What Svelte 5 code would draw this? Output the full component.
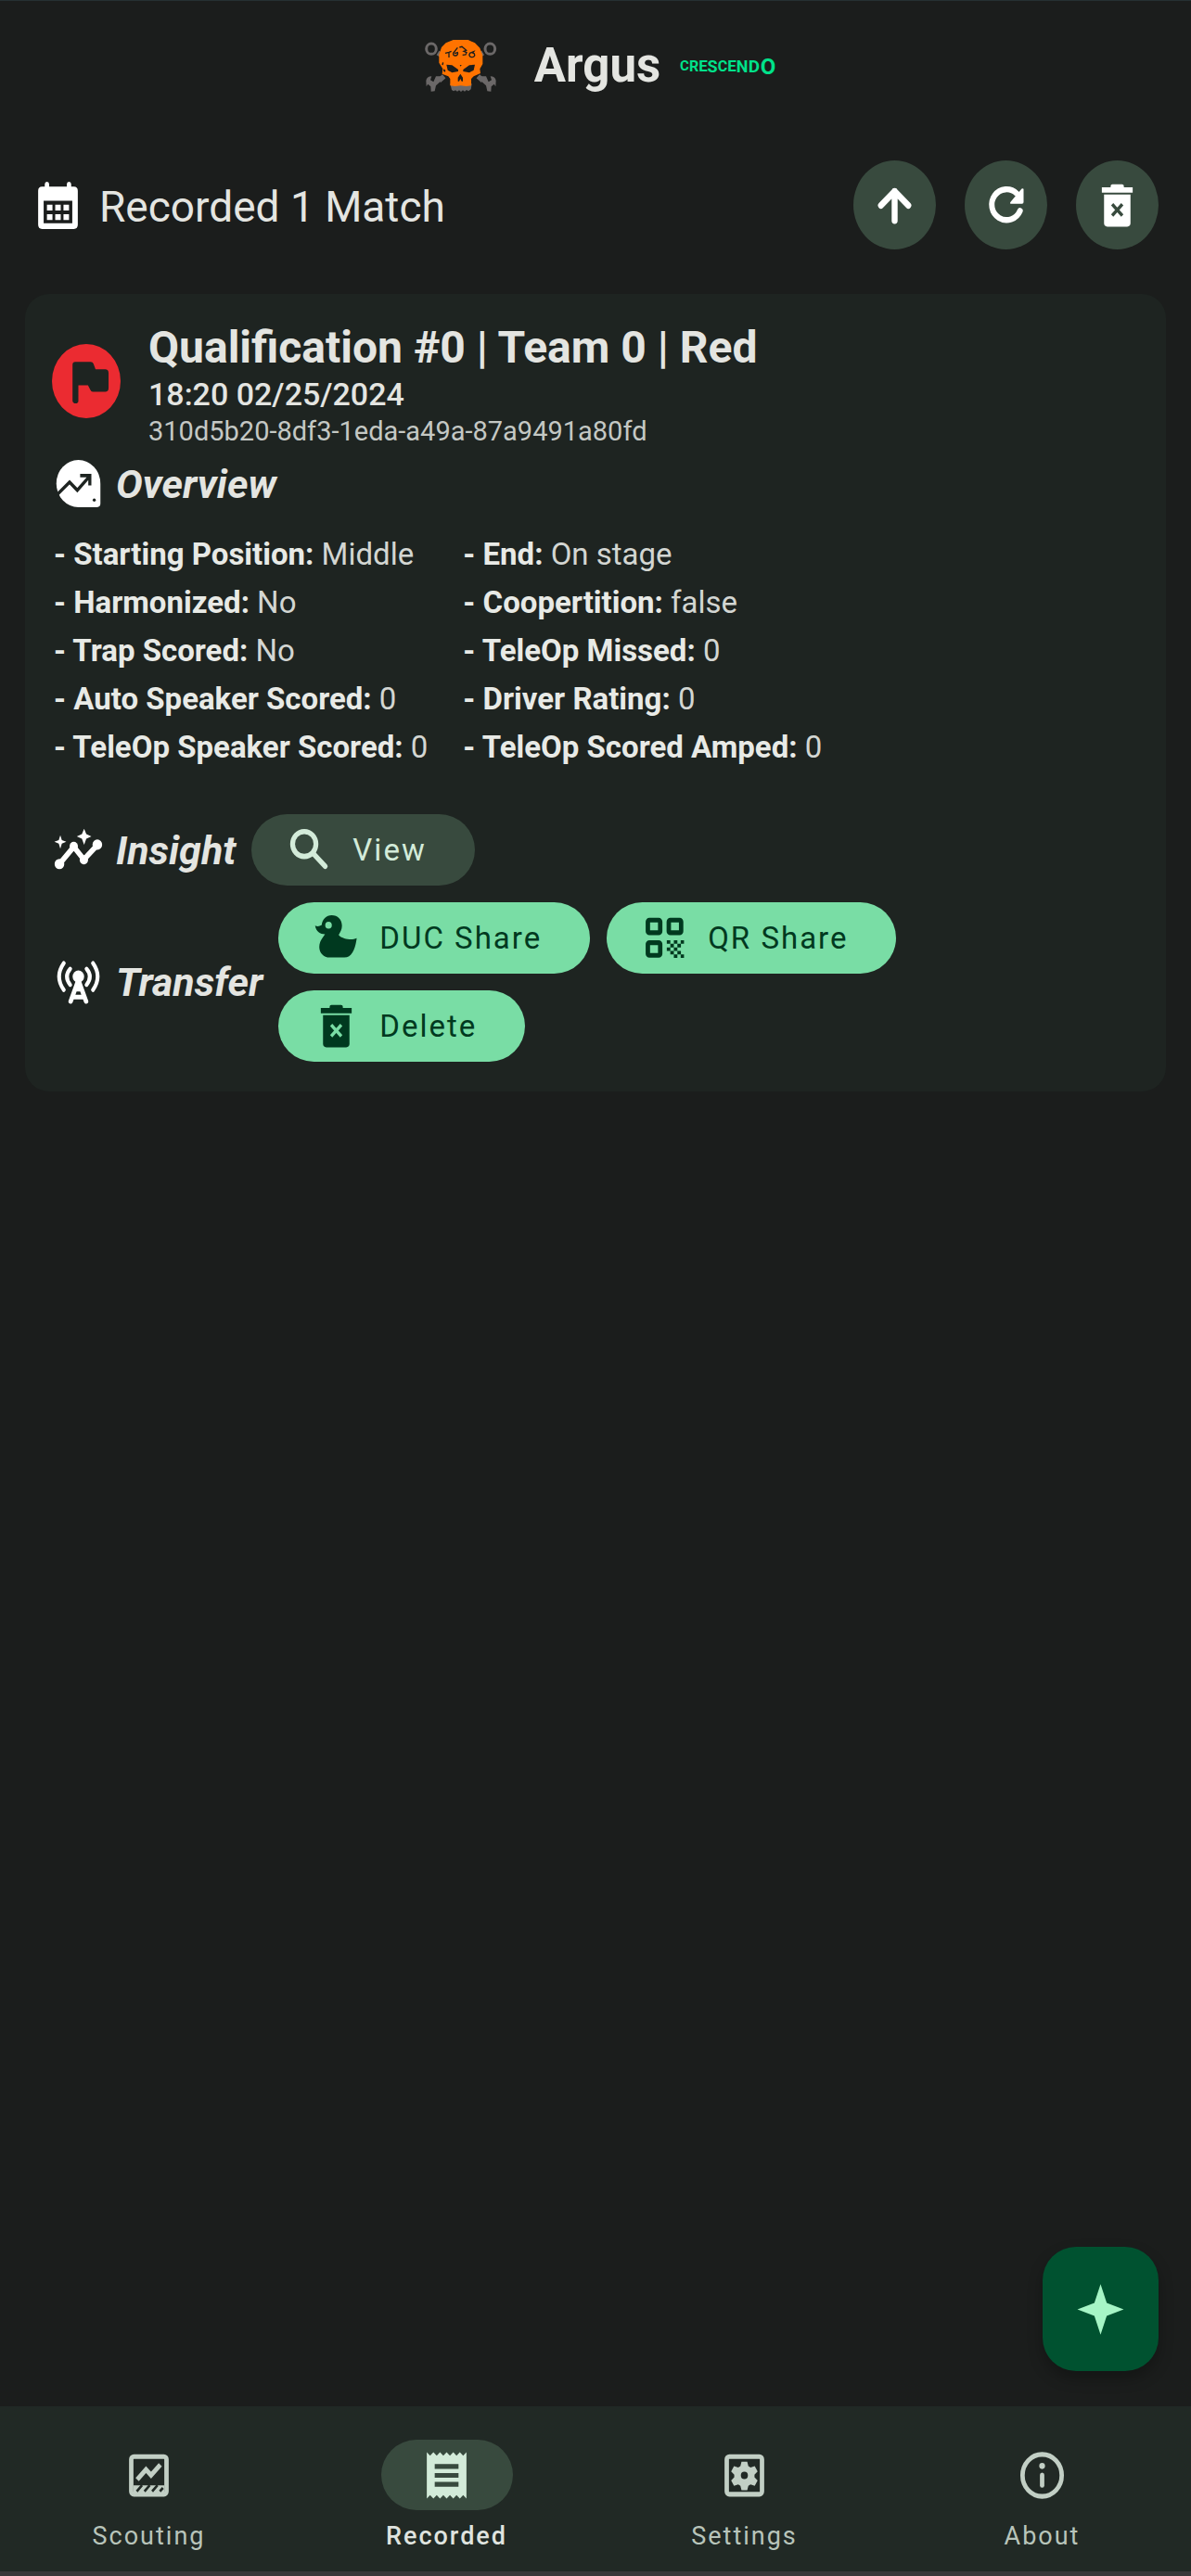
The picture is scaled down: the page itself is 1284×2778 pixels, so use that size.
<script>
  const columns = [
    [
      ['Starting Position', 'Middle'],
      ['Harmonized', 'No'],
      ['Trap Scored', 'No'],
      ['Auto Speaker Scored', '0'],
      ['TeleOp Speaker Scored', '0'],
    ],
    [
      ['End', 'On stage'],
      ['Coopertition', 'false'],
      ['TeleOp Missed', '0'],
      ['Driver Rating', '0'],
      ['TeleOp Scored Amped', '0'],
    ],
  ];

  const tabs = ['Scouting', 'Recorded', 'Settings', 'About'];
  let active = $state('Recorded');
</script>

{#snippet trash()}
  <svg class="icon" viewBox="0 0 24 24" preserveAspectRatio="none" aria-hidden="true">
    <path d="M9 4.3V3.8Q9 3 9.8 3h4.4q.8 0 .8.8v.5h4v2.3H5V4.3z" />
    <path d="M6 7.4h12v12.1q0 1.5-1.5 1.5h-9Q6 21 6 19.500z" />
    <path class="cut" d="M9.700 11.500l4.600 4.800M14.300 11.500l-4.600 4.800" />
  </svg>
{/snippet}

{#snippet tabIcon(name)}
  <svg class="icon" viewBox="0 0 24 24" preserveAspectRatio="none" aria-hidden="true">
    {#if name === 'Scouting'}
      <rect class="line" x="4" y="4" width="16" height="16" rx="1.200" />
      <path class="line" d="M6.700 13.800L10.700 9.500l2.300 2.400L17.200 7.500" />
      <path d="M5 16.200h14V20H5z" />
      <path class="cut thin" d="M6.500 18.800l2.400-2.600M10 18.800l2.400-2.600M13.500 18.800l2.400-2.600M17 18.800l1.400-1.500" />
    {:else if name === 'Recorded'}
      <path d="M3 2.200l1.500 1.400L6 2.200l1.500 1.400L9 2.200l1.500 1.400L12 2.200l1.500 1.400L15 2.200l1.500 1.400L18 2.200l1.500 1.400L21 2.200v19.600l-1.500-1.400L18 21.800l-1.500-1.400L15 21.800l-1.500-1.400L12 21.800l-1.500-1.400L9 21.800l-1.500-1.400L6 21.800l-1.500-1.400L3 21.800z" />
      <path class="cut bars" d="M6.600 8.200h10.800M6.600 12h10.800M6.600 15.800h10.800" />
    {:else if name === 'Settings'}
      <rect class="line" x="4" y="4" width="16" height="16" rx="1.200" />
      <path fill-rule="evenodd" d="M10.700 6.200h2.600l.5 1.900 1 .6 1.900-.6 1.300 2.200-1.400 1.400v1.100l1.400 1.400-1.300 2.200-1.900-.6-1 .6-.5 1.900h-2.600l-.5-1.900-1-.6-1.900.6L6 14.200l1.400-1.400v-1.100L6 10.300l1.300-2.200 1.900.6 1-.6zM12 10.400a1.600 1.600 0 1 0 0 3.200 1.600 1.600 0 0 0 0-3.200z" />
    {:else}
      <ellipse class="line" cx="12" cy="12" rx="8.900" ry="8.900" />
      <circle cx="12" cy="8" r="1.300" />
      <path class="line" stroke-linecap="round" d="M12 11.800v4.400" />
    {/if}
  </svg>
{/snippet}

<div class="app">
  <header class="brand">
    <svg class="skull" viewBox="58 128 234 172" aria-hidden="true">
      <g class="wrench">
        <path d="M100 172l16 10M246 172l-16 10M104 262l16-14M246 262l-16-14" stroke-width="16" />
        <ellipse cx="79" cy="159" rx="16" ry="17" stroke-width="9" fill="none" />
        <ellipse cx="269" cy="159" rx="16" ry="17" stroke-width="9" fill="none" />
        <path class="solid" d="M62 262q2-14 18-14l-4 12 10 6 8-18h22l2 8-24 22-4 18-12 1-1-16-9-8-5 8z" />
        <path class="solid" d="M288 262q-2-14-18-14l4 12-10 6-8-18h-22l-2 8 24 22 4 18 12 1 1-16 9-8 5 8z" />
        <path class="solid" d="M140 272h70l-3 18-8 6-6-4-6 5-6-4-6 5-6-5-6 4-6-4-6 3-6-4z" />
      </g>
      <path class="bone" d="M150 130h48l22 10 16 16 9 24v28l-9 16 2 14-22 10-8 8v22l-16 2-18-2-18 2-16-2v-22l-6-8-20-8 2-16-12-20v-26l8-24 14-14z" />
      <path class="hole" d="M128 210l18 2 20 14v6l-20 4-14-8zM220 210l-18 2-20 14v6l20 4 14-8zM173 240l8 12v12h-4l-4-8-4 8h-4v-12z" />
      <g class="hole">
        <path d="M115 202l4 2-2 8-4-1zM119 224l6 4-1 6-6-3zM171 211h6l-3 5z" />
      </g>
      <path class="scratch" d="M124 173l12-3 8-3M136 170v17M164 155l-14 18q-1 9 8 8 8-2 6-10l-10 3M170 154l8-2 14 12-8 3 9 4-3 7-10 1M216 168l-11 4q-7 8 1 13 10 3 13-4 1-8-6-9z" />
    </svg>
    <h1>Argus</h1>
    <svg class="crescendo" viewBox="0 0 106 56" role="img" aria-label="Crescendo">
      <g text-anchor="middle">
        <text x="6" y="33" font-size="15">C</text>
        <text x="16" y="34" font-size="16">R</text>
        <text x="26" y="34" font-size="17">E</text>
        <text x="36" y="35" font-size="18">S</text>
        <text x="47" y="34" font-size="16">C</text>
        <text x="57" y="34" font-size="17">E</text>
        <text x="68" y="35" font-size="18">N</text>
        <text x="81" y="35" font-size="19">D</text>
        <text x="96" y="37" font-size="24">O</text>
      </g>
    </svg>
  </header>

  <main>
    <div class="toolbar">
      <svg class="icon" viewBox="0 0 24 24" preserveAspectRatio="none" aria-hidden="true">
        <path fill-rule="evenodd" d="M6 3q0-1 1-1t1 1v1h8V3q0-1 1-1t1 1v1h1.200Q21 4 21 5.800v14.400q0 1.800-1.800 1.800H4.800Q3 22 3 20.200V5.800Q3 4 4.800 4H6zM5.500 10v9.600h13V10z" />
        <path d="M7 11.700h2.500v2.500H7zM10.750 11.700h2.500v2.500h-2.500zM14.500 11.700H17v2.500h-2.500zM7 15.700h2.500v2.500H7zM10.750 15.700h2.500v2.500h-2.500zM14.500 15.700H17v2.500h-2.500z" />
      </svg>
      <h2>Recorded 1 Match</h2>
      <div class="tools">
        <button class="round" aria-label="Upload">
          <svg class="icon" viewBox="0 0 24 24" preserveAspectRatio="none" aria-hidden="true">
            <path class="arrow" d="M12 18.500V6M5.800 12L12 6l6.200 6" />
          </svg>
        </button>
        <button class="round" aria-label="Refresh">
          <svg class="icon" viewBox="0 0 24 24" preserveAspectRatio="none" aria-hidden="true">
            <path class="arc" d="M16.900 7A6.700 6.500 0 1 0 18.400 14.300" />
            <path d="M20 5v5.600q0 .7-.7.700h-4.700q-1.200 0-.4-.9l4.600-5.100q.6-.8 1.200-.3z" />
          </svg>
        </button>
        <button class="round" aria-label="Delete all">{@render trash()}</button>
      </div>
    </div>

    <article class="card">
      <div class="summary">
        <svg class="flag" viewBox="2 2 20 20" preserveAspectRatio="none" aria-hidden="true">
          <path fill-rule="evenodd" d="M12 2a10 10 0 1 0 0 20 10 10 0 0 0 0-20zM8.800 6.800h4.500q.6 0 .8.500l.6 1.500h2.800q1 0 1 1v4.100q0 1-1 1h-3.600q-.5 0-.7-.5l-.7-1.300H9.700v4.200q0 .7-.8.700T8 17.300V7.600q0-.8.800-.8z" />
        </svg>
        <div>
          <h3>Qualification #0 | Team 0 | Red</h3>
          <p class="date">18:20 02/25/2024</p>
          <p class="uuid">310d5b20-8df3-1eda-a49a-87a9491a80fd</p>
        </div>
      </div>

      <h4 class="overview">
        <svg class="icon" viewBox="0 0 24 24" preserveAspectRatio="none" aria-hidden="true">
          <path d="M12 2a10 10 0 0 1 10 10v8.500q0 1.500-1.500 1.500H12A10 10 0 0 1 12 2z" />
          <path class="cut" d="M2 17l6-5.600 3.500 3.400L17 9M12.800 8.600H17.200V12.800" />
          <circle class="dot" cx="19.200" cy="19" r=".7" />
        </svg>
        <span>Overview</span>
      </h4>
      <div class="stats">
        {#each columns as rows}
          <ul>
            {#each rows as [label, value]}
              <li><b>- {label}:</b> {value}</li>
            {/each}
          </ul>
        {/each}
      </div>

      <div class="section">
        <h4>
          <svg class="icon" viewBox="0 0 24 24" preserveAspectRatio="none" aria-hidden="true">
            <path class="line wide" d="M3.400 18L9.900 10.700l4.600 5.400L20.600 10" />
            <circle cx="3.400" cy="18" r="2.200" /><circle cx="9.900" cy="10.500" r="1.900" />
            <circle cx="14.500" cy="16.300" r="1.900" /><circle cx="20.600" cy="9.800" r="2.200" />
            <path d="M14.600 3l1 2.300 2.300 1-2.300 1-1 2.500-1-2.500-2.300-1 2.300-1zM3.800 5.800l.7 2.100 2 .7-2 .7-.7 2.200-.7-2.200-2-.7 2-.7z" />
          </svg>
          <span>Insight</span>
        </h4>
        <div class="actions">
          <button class="pill tonal">
            <svg class="icon" viewBox="0 0 24 24" preserveAspectRatio="none" aria-hidden="true">
              <circle class="line mid" cx="9.700" cy="9.500" r="5.300" />
              <path class="line mid" stroke-linecap="round" d="M13.800 13.600l5.400 5.400" />
            </svg>
            View
          </button>
        </div>
      </div>

      <div class="section">
        <h4>
          <svg class="icon" viewBox="0 0 24 24" preserveAspectRatio="none" aria-hidden="true">
            <circle cx="12" cy="9.500" r="2.600" />
            <path class="line" stroke-linecap="round" d="M12 11L8.500 20M12 11l3.500 9M9.400 18.200h5.200M10.600 14.800h2.800" />
            <path class="line slim" stroke-linecap="round" d="M8.300 6.200q-3 3.300 0 6.800M15.700 6.200q3 3.300 0 6.800M5.400 3.800q-4.300 5.700 0 11.400M18.600 3.800q4.300 5.700 0 11.400" />
          </svg>
          <span>Transfer</span>
        </h4>
        <div class="actions">
          <button class="pill">
            <svg class="icon" viewBox="0 0 24 24" preserveAspectRatio="none" aria-hidden="true">
              <path fill-rule="evenodd" d="M9.900 2.400c2.800 0 4.700 1.900 4.700 4.400 0 1.600-.8 2.900-1.500 3.900.6.900 2.800 1.700 4.800 1.900 1.300.1 2.400-.1 3.400-.5-.5 3.500-1.700 8.200-5.600 8.200H9c-2.700 0-4.700-2-4.700-4.500 0-2.200 1.200-3.500 2.600-5.400-2.200 0-4-1-4.500-3.600 1 .4 2 .3 3-.3.300-2.300 2.100-4.100 4.500-4.100zM8.500 5.100a1.500 1.500 0 1 0 0 3 1.500 1.500 0 0 0 0-3z" />
            </svg>
            DUC Share
          </button>
          <button class="pill">
            <svg class="icon" viewBox="0 0 24 24" preserveAspectRatio="none" aria-hidden="true">
              <g class="line"><rect x="4.400" y="4.400" width="5.600" height="5.400" rx=".7" /><rect x="13.900" y="4.400" width="5.600" height="5.400" rx=".7" /><rect x="4.400" y="14" width="5.600" height="5.400" rx=".7" /></g>
              <path d="M13 13h1.600v1.500H13zM16.200 13h1.600v1.500h-1.600zM14.600 14.500h1.600V16h-1.600zM17.800 14.500h1.600V16h-1.600zM13 16h1.600v1.500H13zM16.200 16h1.600v1.500h-1.600zM14.600 17.500h1.600V19h-1.600zM17.800 17.500h1.600V19h-1.600zM16.200 19h1.600v1.500h-1.600zM19.300 19h1.500v1.500h-1.500zM19.300 13h1.500v1.500h-1.500z" />
            </svg>
            QR Share
          </button>
          <button class="pill">{@render trash()}Delete</button>
        </div>
      </div>
    </article>
  </main>

  <button class="fab" aria-label="New match">
    <svg class="icon" viewBox="0 0 24 24" preserveAspectRatio="none" aria-hidden="true">
      <path d="M12 1.300l2.800 7.900 7.700 2.800-7.700 2.800L12 22.700l-2.800-7.900L1.500 12l7.700-2.800z" />
    </svg>
  </button>

  <nav>
    {#each tabs as tab}
      <button class="tab" class:active={active === tab} onclick={() => (active = tab)}>
        <span class="indicator">{@render tabIcon(tab)}</span>
        {tab}
      </button>
    {/each}
  </nav>
</div>

<style>
  :global(body) { background: #1b1d1c; }
  .app {
    box-sizing: border-box;
    min-height: 100vh;
    display: flex;
    flex-direction: column;
    position: relative;
    border-top: 1px solid #263032;
    border-bottom: 5px solid #39383a;
    background: #1b1d1c;
    color: #e4e5e1;
    font-family: Roboto, "Liberation Sans", sans-serif;
  }
  h1, h2, h3, h4, p, ul { margin: 0; padding: 0; }
  ul { list-style: none; }
  button { font: inherit; color: inherit; border: 0; padding: 0; cursor: pointer; }
  .icon { width: 57px; height: 61px; flex: none; display: block; fill: currentColor; stroke: none; }
  .line { fill: none; stroke: currentColor; stroke-width: 2; }
  .wide { stroke-width: 2.300; stroke-linejoin: round; }
  .mid { stroke-width: 2.200; }
  .slim { stroke-width: 1.700; }
  .arrow { fill: none; stroke: currentColor; stroke-width: 2.700; stroke-linejoin: round; }
  .arrow, .arc { stroke-linecap: round; }
  .arc { fill: none; stroke: currentColor; stroke-width: 2.500; }
  .cut { fill: none; stroke: var(--cut); stroke-width: 1.400; }
  .bars { stroke-width: 2; }
  .thin { stroke-width: 1.100; }
  .dot { fill: var(--cut); }

  .brand { height: 140px; display: flex; align-items: center; justify-content: center; padding-left: 12px; }
  .skull { width: 78px; height: 58px; margin-right: 40px; }
  .wrench { stroke: #6b6868; }
  .solid { fill: #6b6868; stroke: none; }
  .bone { fill: #ff7300; }
  .hole { fill: #1b1d1c; }
  .scratch { fill: none; stroke: #1b1d1c; stroke-width: 4; }
  h1 { font-size: 51px; font-weight: 700; line-height: 60px; }
  .crescendo { width: 106px; height: 56px; margin-left: 20px; fill: #00e28a; font-weight: 700; }

  .toolbar { display: flex; align-items: center; padding: 32px 35px 0 34px; }
  .toolbar > .icon { color: #fff; }
  h2 { flex: 1; margin-left: 16px; padding-top: 4px; font-size: 46px; font-weight: 400; line-height: 56px; }
  .tools { display: flex; gap: 31px; }
  .round { --cut: #384a3e; width: 89px; height: 96px; border-radius: 50%; background: #384a3e; color: #fff; display: flex; align-items: center; justify-content: center; }

  .card { --cut: #1e2421; margin: 48px 27px 0; padding: 30px 29px 32px; border-radius: 26px; background: #1e2421; }
  .summary { display: flex; align-items: flex-start; gap: 30px; }
  .flag { width: 74px; height: 80px; margin-top: 24px; flex: none; fill: #eb2b31; }
  h3 { font-size: 48px; font-weight: 700; line-height: 56px; }
  .date { font-size: 34px; font-weight: 500; line-height: 44px; }
  .uuid { font-size: 29px; line-height: 36px; color: #c4c8c4; }
  h4 { display: flex; align-items: center; gap: 12px; font-size: 43px; line-height: 56px; font-weight: 700; font-style: italic; }
  h4 .icon { color: #fff; }
  .overview { margin-top: 8px; }
  .stats { display: flex; gap: 38px; margin: 20px 0 46px 2px; font-size: 33px; line-height: 52px; color: #d3d6d2; }
  .stats b { color: #e8eae6; }
  .section { display: flex; align-items: center; gap: 17px; }
  .section + .section { margin-top: 18px; }
  .actions { flex: 1; max-width: 740px; display: flex; flex-wrap: wrap; gap: 18px; }
  .pill { --cut: #79dda5; height: 77px; display: flex; align-items: center; gap: 18px; padding: 0 52px 0 34px; border-radius: 39px; background: #79dda5; color: #00391f; font-size: 33px; font-weight: 400; letter-spacing: 2px; }
  .tonal { background: #384a3e; color: #d3ebd9; }

  .fab { position: absolute; right: 35px; bottom: 216px; width: 125px; height: 134px; border-radius: 36px; background: #005230; color: #a6f5c6; display: flex; align-items: center; justify-content: center; box-shadow: 0 8px 16px #0004; }
  nav { --cut: #212925; margin-top: auto; height: 178px; background: #212925; display: grid; grid-template-columns: repeat(4, 1fr); }
  .tab { background: none; padding-top: 36px; display: flex; flex-direction: column; align-items: center; gap: 10px; color: #b8c4ba; font-size: 27px; line-height: 36px; letter-spacing: 2px; }
  .indicator { width: 142px; height: 76px; border-radius: 38px; display: flex; align-items: center; justify-content: center; color: #c2cfc5; }
  .active { color: #dfe3df; font-weight: 500; }
  .active .indicator { --cut: #384a3e; background: #384a3e; color: #d3ebd9; }
</style>
